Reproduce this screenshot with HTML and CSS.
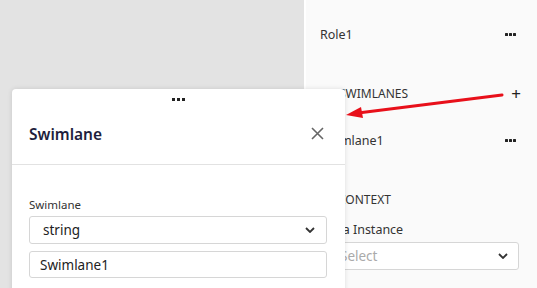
FILE: index.html
```html
<!DOCTYPE html>
<html>
<head>
<meta charset="utf-8">
<link rel="stylesheet" href="styles.css">
</head>
<body>
<div class="app">
  <div class="canvas"></div>
  <aside class="panel">
    <div class="row first">
      <span class="name">Role1</span>
      <span class="more"><i></i><i></i><i></i></span>
    </div>
    <div class="row section lanes">
      <span class="name">SWIMLANES</span>
      <span class="plus">+</span>
    </div>
    <div class="row">
      <span class="name">Swimlane1</span>
      <span class="more"><i></i><i></i><i></i></span>
    </div>
    <div class="row section">
      <span class="name">CONTEXT</span>
    </div>
    <div class="field-label">Data Instance</div>
    <div class="pselect">
      <span class="placeholder">Select</span>
      <svg class="chev" width="10" height="6" viewBox="0 0 10 6"><path d="M1 1l4 4 4-4" fill="none" stroke="#333" stroke-width="1.8"/></svg>
    </div>
  </aside>
</div>

<div class="modal">
  <div class="drag"><i></i><i></i><i></i></div>
  <div class="mhead">
    <span class="title">Swimlane</span>
    <svg class="close" width="13" height="13" viewBox="0 0 13 13"><path d="M1 1l11 11M12 1L1 12" stroke="#666" stroke-width="1.6" fill="none"/></svg>
  </div>
  <div class="mbody">
    <div class="label">Swimlane</div>
    <div class="select">
      <span>string</span>
      <svg class="chev" width="10" height="6" viewBox="0 0 10 6"><path d="M1 1l4 4 4-4" fill="none" stroke="#333" stroke-width="1.8"/></svg>
    </div>
    <div class="input">Swimlane1</div>
  </div>
</div>

<svg class="arrow" width="537" height="288" viewBox="0 0 537 288">
  <line x1="502" y1="95" x2="358" y2="113" stroke="#e8101a" stroke-width="3" stroke-linecap="round"/>
  <path d="M346 115 L361 107 L363 118 Z" fill="#e8101a"/>
</svg>
</body>
</html>
```

FILE: styles.css
```css
* { box-sizing: border-box; }
html, body { margin: 0; padding: 0; }
body {
  width: 537px;
  height: 288px;
  overflow: hidden;
  font-family: "Noto Sans", "Open Sans", sans-serif;
  color: #333;
  position: relative;
}
.app { display: flex; height: 288px; }
.canvas { flex: 0 0 304px; background: #e3e3e3; }
.panel {
  flex: 1;
  background: #fafafa;
  border-left: 2px solid #ffffff;
  padding: 20px 18px 0 14px;
  display: flex;
  flex-direction: column;
}
.row {
  height: 28px;
  display: flex;
  align-items: center;
  justify-content: space-between;
  font-size: 12.5px;
  margin-top: 19px;
}
.row.first { margin-top: 0; }
.row.section { margin-top: 31px; padding-left: 18px; font-size: 12px; }
.row.section.lanes { padding-left: 19px; }
.more { display: flex; gap: 1px; margin-right: 3px; }
.more i { width: 3px; height: 3px; background: #222; display: block; border-radius: 0.5px; }
.plus { font-size: 17px; color: #222; margin-right: -2px; }
.field-label { font-size: 12.5px; margin-top: 8px; height: 18px; line-height: 18px; padding-left: 2px; }
.pselect {
  margin-top: 3px;
  height: 28px;
  border: 1px solid #d6d6d6;
  border-radius: 3px;
  background: #fff;
  display: flex;
  align-items: center;
  justify-content: space-between;
  padding: 0 10px 0 19px;
  font-size: 13.5px;
}
.placeholder { color: #aaa; }

.modal {
  position: absolute;
  left: 12px;
  top: 89px;
  width: 333px;
  height: 230px;
  background: #fff;
  border-radius: 4px;
  box-shadow: 0 0 5px rgba(0,0,0,0.12);
}
.drag { display: flex; justify-content: center; gap: 2px; padding-top: 9px; height: 20px; }
.drag i { width: 3px; height: 3px; background: #222; display: block; }
.mhead {
  height: 56px;
  display: flex;
  align-items: center;
  justify-content: space-between;
  padding: 0 21px 6px 17px;
  border-bottom: 1px solid #e2e2e2;
}
.title { font-size: 15.5px; font-weight: 600; color: #1e1e3c; }
.mbody { padding: 31px 18px 0 17px; }
.label { font-size: 11.5px; color: #333; height: 18px; line-height: 18px; }
.select {
  margin-top: 2px;
  height: 28px;
  border: 1px solid #d6d6d6;
  border-radius: 3px;
  display: flex;
  align-items: center;
  justify-content: space-between;
  padding: 0 11px 0 13px;
  font-size: 13.5px;
  color: #222;
}
.input {
  margin-top: 7px;
  height: 27px;
  border: 1px solid #d6d6d6;
  border-radius: 3px;
  display: flex;
  align-items: center;
  padding: 0 10px;
  font-size: 13.5px;
  color: #222;
}
.arrow { position: absolute; left: 0; top: 0; pointer-events: none; }
```
